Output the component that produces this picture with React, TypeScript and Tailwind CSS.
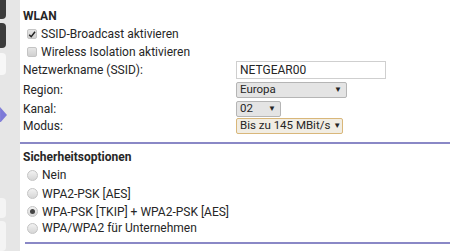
const Select = ({ label, w, focus }: { label: string; w: string; focus?: boolean }) => (
  <div
    className={`flex items-center justify-between h-[16px] pl-[3px] pr-[4px] rounded-[2px] border text-[11.5px] leading-none whitespace-nowrap ${w} ${
      focus ? "border-[#d9b77a] bg-[#f1ede3]" : "border-[#b5b5b5] bg-[#e4e4e4]"
    }`}
  >
    <span>{label}</span>
    <span className="text-[8px] ml-[3px]">▼</span>
  </div>
);

const Checkbox = ({ checked }: { checked?: boolean }) => (
  <div className="w-[10px] h-[10px] rounded-[2px] border border-[#c4c4c4] bg-gradient-to-b from-[#e6e6e6] to-[#d0d0d0] flex items-center justify-center">
    {checked && (
      <svg width="9" height="9" viewBox="0 0 10 10">
        <path d="M1.5 5.2 L4 7.8 L8.8 1.5" stroke="#222" strokeWidth="1.8" fill="none" />
      </svg>
    )}
  </div>
);

const Radio = ({ checked }: { checked?: boolean }) => (
  <div className="w-[11px] h-[11px] rounded-full border border-[#c4c4c4] bg-gradient-to-b from-[#f2f2f2] to-[#d6d6d6] flex items-center justify-center">
    {checked && <div className="w-[5px] h-[5px] rounded-full bg-[#444]" />}
  </div>
);

const App: React.FC = () => {
  return (
    <div className="flex w-[450px] h-[251px] overflow-hidden bg-white text-[#262626] font-['Roboto',sans-serif]">
      <div className="w-[20px] shrink-0 bg-[#e6e6e6] flex flex-col">
        <div className="w-[6px] h-[19px] bg-[#3c3c3c] rounded-br-[4px]" />
        <div className="w-[6px] h-[25px] mt-[4px] bg-[#3c3c3c] rounded-r-[4px]" />
        <div className="w-[6px] h-[22px] mt-[5px] bg-[#f7f7f7] rounded-r-[4px]" />
        <svg width="8" height="16" viewBox="0 0 8 16" className="mt-[32px]">
          <path d="M0 0 L7 8 L0 16 Z" fill="#7d7ad8" />
        </svg>
        <div className="w-[6px] h-[20px] mt-[76px] bg-[#f4f4f4] rounded-r-[4px]" />
        <div className="w-[6px] h-[30px] mt-[3px] bg-[#f4f4f4] rounded-r-[4px]" />
      </div>
      <div className="flex-1 flex flex-col pt-[9px]">
        <div className="pl-[3px] h-[14px] flex items-center text-[12px] font-bold">WLAN</div>
        <div className="pl-[7px] h-[18px] mt-[2px] flex items-center gap-[4px] text-[12px]">
          <Checkbox checked />
          <span>SSID-Broadcast aktivieren</span>
        </div>
        <div className="pl-[7px] h-[18px] flex items-center gap-[4px] text-[12px]">
          <Checkbox />
          <span>Wireless Isolation aktivieren</span>
        </div>
        <div className="grid grid-cols-[216px_1fr] text-[12px]">
          <div className="pl-[3px] h-[18px] flex items-center">Netzwerkname (SSID):</div>
          <div className="h-[18px] flex items-center">
            <div className="w-[150px] h-[18px] border border-[#cfcfcf] bg-white flex items-center pl-[3px] text-[12px]">
              NETGEAR00
            </div>
          </div>
          <div className="pl-[3px] h-[21px] flex items-center">Region:</div>
          <div className="h-[21px] flex items-center">
            <Select label="Europa" w="w-[111px]" />
          </div>
          <div className="pl-[3px] h-[17px] flex items-center">Kanal:</div>
          <div className="h-[17px] flex items-center">
            <Select label="02" w="w-[45px]" />
          </div>
          <div className="pl-[3px] h-[17px] flex items-center">Modus:</div>
          <div className="h-[17px] flex items-center">
            <Select label="Bis zu 145 MBit/s" w="w-[107px]" focus />
          </div>
        </div>
        <div className="mt-[8px] h-[2px] bg-[#8a88c6]" />
        <div className="pl-[3px] h-[14px] mt-[6px] flex items-center text-[12px] font-bold">Sicherheitsoptionen</div>
        <div className="flex flex-col text-[12px] mt-[2px]">
          <div className="pl-[7px] h-[18px] flex items-center gap-[4px]">
            <Radio />
            <span>Nein</span>
          </div>
          <div className="pl-[7px] h-[19px] flex items-center gap-[4px]">
            <Radio />
            <span>WPA2-PSK [AES]</span>
          </div>
          <div className="pl-[7px] h-[17px] flex items-center gap-[4px]">
            <Radio checked />
            <span>WPA-PSK [TKIP] + WPA2-PSK [AES]</span>
          </div>
          <div className="pl-[7px] h-[16px] flex items-center gap-[4px]">
            <Radio />
            <span>WPA/WPA2 für Unternehmen</span>
          </div>
        </div>
        <div className="mt-[6px] ml-[5px] h-[2px] bg-[#8a88c6]" />
      </div>
    </div>
  );
};

export default App;
